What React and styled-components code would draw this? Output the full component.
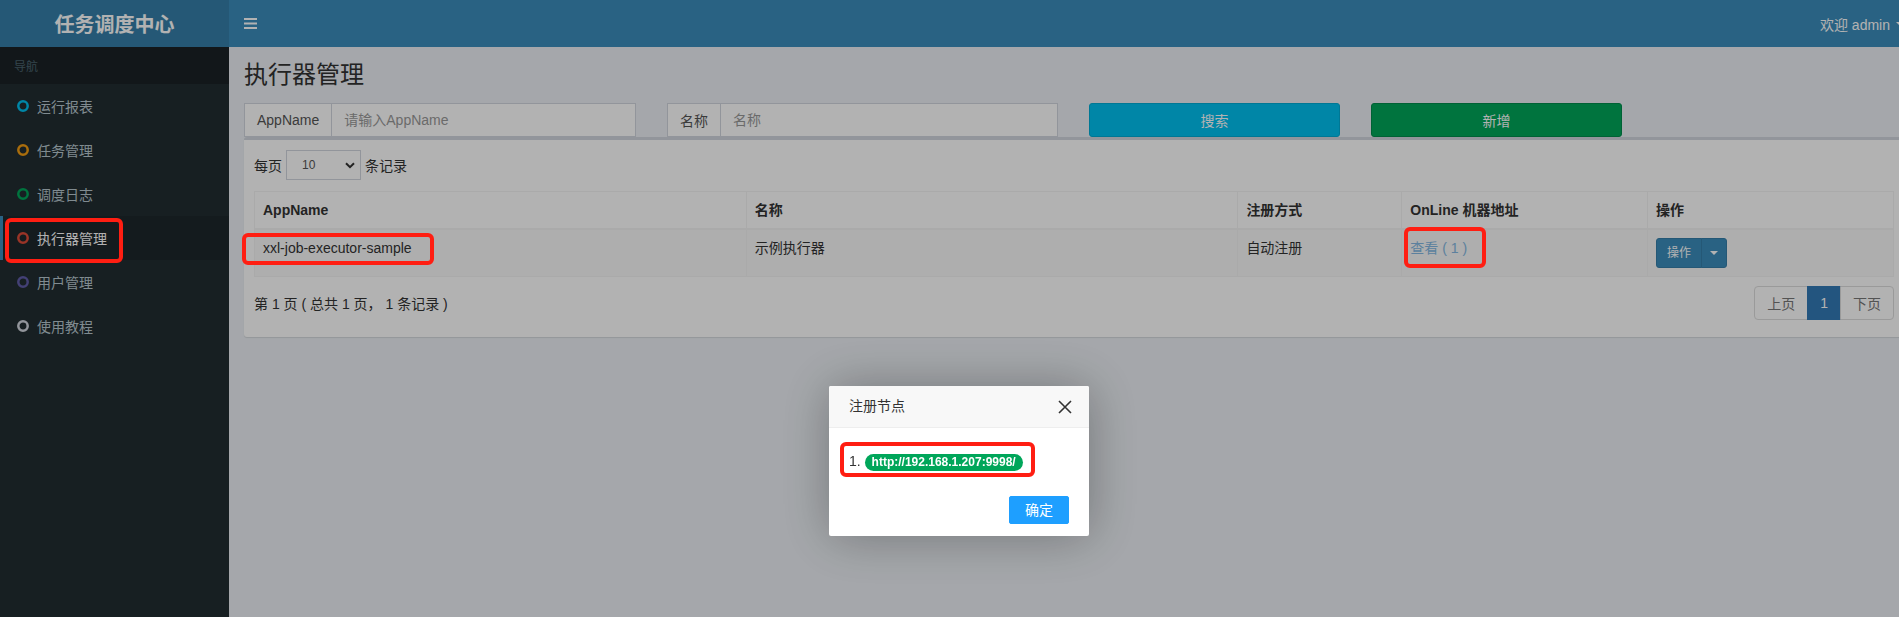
import React from "react";
import styled, { createGlobalStyle } from "styled-components";

const GlobalStyle = createGlobalStyle`
  html, body {
    margin: 0;
    padding: 0;
    height: 100%;
    overflow: hidden;
  }
  body {
    font-family: "Liberation Sans", "Noto Sans CJK SC", sans-serif;
    font-size: 14px;
    color: #333;
    background: #ecf0f5;
  }
  * {
    box-sizing: border-box;
  }
`;

// the captured page is a little wider than the window, so its right edge is cut
const Page = styled.div`
  width: 1919px;
  height: 617px;
  display: flex;
  flex-direction: column;
`;

const Header = styled.header`
  display: flex;
  height: 47px;
  flex-shrink: 0;
`;

const Logo = styled.div`
  width: 229px;
  background: #367fa9;
  color: #fff;
  font-size: 20px;
  font-weight: 700;
  display: flex;
  align-items: center;
  justify-content: center;
`;

const Navbar = styled.nav`
  flex: 1;
  background: #3c8dbc;
  color: #fff;
  display: flex;
  align-items: center;
  justify-content: space-between;
  padding: 0 15px;
`;

const UserMenu = styled.div`
  display: flex;
  align-items: center;
  gap: 6px;
  font-size: 14px;
`;

const Caret = styled.span`
  width: 0;
  height: 0;
  border-top: 4px solid #fff;
  border-left: 4px solid transparent;
  border-right: 4px solid transparent;
`;

const Body = styled.div`
  flex: 1;
  display: flex;
  min-height: 0;
`;

const Sidebar = styled.aside`
  width: 229px;
  flex-shrink: 0;
  background: #222d32;
`;

const NavHeader = styled.div`
  height: 37px;
  padding: 0 14px;
  display: flex;
  align-items: center;
  background: #1a2226;
  color: #4b646f;
  font-size: 12px;
`;

const MenuItem = styled.div`
  position: relative;
  height: 44px;
  display: flex;
  align-items: center;
  gap: 8px;
  padding-left: 14px;
  border-left: 3px solid ${(p) => (p.$active ? "#3c8dbc" : "transparent")};
  background: ${(p) => (p.$active ? "#1e282c" : "transparent")};
  color: ${(p) => (p.$active ? "#fff" : "#b8c7ce")};
  font-size: 14px;
`;

const Mark = styled.span`
  position: absolute;
  left: ${(p) => p.$l}px;
  top: ${(p) => p.$t}px;
  width: ${(p) => p.$w}px;
  height: ${(p) => p.$h}px;
  border: 4px solid #ff1e12;
  border-radius: 6px;
  z-index: 300;
  pointer-events: none;
`;

const Main = styled.main`
  flex: 1;
  min-width: 0;
  padding: 15px 15px 0;
`;

const Title = styled.h1`
  margin: 0;
  font-size: 24px;
  line-height: 26px;
  font-weight: 400;
  color: #333;
`;

const SearchRow = styled.div`
  display: grid;
  grid-template-columns: 392px 391px 251px 251px;
  column-gap: 31px;
  margin-top: 15px;
`;

const InputGroup = styled.div`
  display: flex;
  height: 34px;
`;

const Addon = styled.span`
  display: flex;
  align-items: center;
  padding: 0 12px;
  background: #fff;
  color: #555;
  border: 1px solid #d2d6de;
  border-right: 0;
`;

const Input = styled.input`
  flex: 1;
  min-width: 0;
  border: 1px solid #d2d6de;
  padding: 6px 12px;
  font: inherit;
  color: #555;
  background: #fff;
  outline: none;
  &::placeholder {
    color: #999;
  }
`;

const Btn = styled.div`
  height: 34px;
  display: flex;
  align-items: center;
  justify-content: center;
  border-radius: 3px;
  color: #fff;
  background: ${(p) => p.$bg};
  border: 1px solid ${(p) => p.$border};
`;

const Box = styled.div`
  background: #fff;
  border-top: 3px solid #d2d6de;
  border-radius: 3px;
  box-shadow: 0 1px 1px rgba(0, 0, 0, 0.1);
  padding: 10px;
`;

const LengthRow = styled.div`
  display: flex;
  align-items: center;
  gap: 4px;
  height: 30px;
`;

const FakeSelect = styled.div`
  width: 75px;
  height: 30px;
  border: 1px solid #d2d6de;
  display: flex;
  align-items: center;
  justify-content: space-between;
  padding: 0 5px 0 15px;
  font-size: 12px;
  color: #555;
`;

const Table = styled.table`
  width: 100%;
  margin-top: 11px;
  border-collapse: collapse;
  table-layout: fixed;
`;

const Th = styled.th`
  width: ${(p) => p.$w};
  text-align: left;
  font-weight: 700;
  padding: 8px;
  line-height: 20px;
  border: 1px solid #f4f4f4;
  border-bottom-width: 2px;
  vertical-align: bottom;
`;

const Tr = styled.tr`
  background: ${(p) => (p.$odd ? "#f9f9f9" : "#fff")};
`;

const Td = styled.td`
  padding: 8px;
  line-height: 20px;
  border: 1px solid #f4f4f4;
  vertical-align: top;
`;

const Anchor = styled.span`
  position: relative;
  display: inline-block;
`;

const Link = styled(Anchor)`
  color: #84b8e2;
`;

const BtnGroup = styled.div`
  display: inline-flex;
  height: 30px;
`;

const OpBtn = styled.div`
  display: flex;
  align-items: center;
  justify-content: center;
  padding: 0 10px;
  font-size: 12px;
  color: #fff;
  background: #3c8dbc;
  border: 1px solid #367fa9;
  border-radius: ${(p) => (p.$caret ? "0 3px 3px 0" : "3px 0 0 3px")};
  margin-left: ${(p) => (p.$caret ? "-1px" : "0")};
  width: ${(p) => (p.$caret ? "26px" : "auto")};
`;

const Footer = styled.div`
  display: flex;
  align-items: center;
  justify-content: space-between;
  margin-top: 9px;
  margin-bottom: 7px;
`;

const Pagination = styled.div`
  display: flex;
  height: 34px;
`;

const PageLink = styled.div`
  display: flex;
  align-items: center;
  padding: 0 12px;
  margin-left: -1px;
  border: 1px solid ${(p) => (p.$active ? "#337ab7" : "#ddd")};
  background: ${(p) => (p.$active ? "#337ab7" : "#fff")};
  color: ${(p) => (p.$active ? "#fff" : "#777")};
  &:first-child {
    margin-left: 0;
    border-radius: 4px 0 0 4px;
  }
  &:last-child {
    border-radius: 0 4px 4px 0;
  }
`;

const Shade = styled.div`
  position: fixed;
  inset: 0;
  background: rgba(0, 0, 0, 0.3);
  z-index: 100;
`;

const Modal = styled.div`
  position: fixed;
  left: 829px;
  top: 386px;
  width: 260px;
  background: #fff;
  border-radius: 2px;
  box-shadow: 1px 1px 50px rgba(0, 0, 0, 0.3);
  z-index: 200;
`;

const ModalTitle = styled.div`
  position: relative;
  height: 42px;
  line-height: 41px;
  padding: 0 80px 0 20px;
  background: #f8f8f8;
  border-bottom: 1px solid #eee;
  border-radius: 2px 2px 0 0;
  color: #333;
  font-size: 14px;
`;

const Close = styled.svg`
  position: absolute;
  right: 17px;
  top: 14px;
`;

const ModalBody = styled.div`
  padding: 23px 20px 20px;
  line-height: 20px;
  color: #333;
`;

const Badge = styled.span`
  display: inline-block;
  padding: 0 7px;
  line-height: 17px;
  border-radius: 10px;
  background: #00a65a;
  color: #fff;
  font-size: 12px;
  font-weight: 700;
`;

const ModalFooter = styled.div`
  display: flex;
  justify-content: flex-end;
  padding: 5px 15px 12px;
`;

const ConfirmBtn = styled.div`
  height: 28px;
  line-height: 26px;
  padding: 0 15px;
  margin: 0 5px;
  border: 1px solid #1e9fff;
  background: #1e9fff;
  color: #fff;
  border-radius: 2px;
  font-size: 14px;
`;

const Ring = ({ color }) => (
  <svg width="12" height="12" viewBox="0 0 12 12">
    <circle cx="6" cy="6" r="4.7" fill="none" stroke={color} strokeWidth="2.5" />
  </svg>
);

const Bars = () => (
  <svg width="13" height="11" viewBox="0 0 13 11">
    <rect x="0" y="0" width="13" height="2" fill="#fff" />
    <rect x="0" y="4.5" width="13" height="2" fill="#fff" />
    <rect x="0" y="9" width="13" height="2" fill="#fff" />
  </svg>
);

const menu = [
  { label: "运行报表", color: "#00c0ef" },
  { label: "任务管理", color: "#f39c12" },
  { label: "调度日志", color: "#00a65a" },
  { label: "执行器管理", color: "#dd4b39", active: true },
  { label: "用户管理", color: "#605ca8" },
  { label: "使用教程", color: "#d2d6de" },
];

const App = () => {
  return (
    <Page>
      <GlobalStyle />
      <Header>
        <Logo>任务调度中心</Logo>
        <Navbar>
          <Bars />
          <UserMenu>
            欢迎 admin
            <Caret />
          </UserMenu>
        </Navbar>
      </Header>
      <Body>
        <Sidebar>
          <NavHeader>导航</NavHeader>
          {menu.map((m) => (
            <MenuItem key={m.label} $active={m.active}>
              <Ring color={m.color} />
              {m.label}
              {m.active && <Mark $l={2} $t={2} $w={118} $h={45} />}
            </MenuItem>
          ))}
        </Sidebar>
        <Main>
          <Title>执行器管理</Title>
          <SearchRow>
            <InputGroup>
              <Addon>AppName</Addon>
              <Input placeholder="请输入AppName" />
            </InputGroup>
            <InputGroup>
              <Addon>名称</Addon>
              <Input placeholder="名称" />
            </InputGroup>
            <Btn $bg="#00c0ef" $border="#00acd6">搜索</Btn>
            <Btn $bg="#00a65a" $border="#008d4c">新增</Btn>
          </SearchRow>
          <Box>
            <LengthRow>
              每页
              <FakeSelect>
                10
                <svg width="10" height="7" viewBox="0 0 10 7">
                  <path d="M1 1.2 L5 5.2 L9 1.2" fill="none" stroke="#333" strokeWidth="2" />
                </svg>
              </FakeSelect>
              条记录
            </LengthRow>
            <Table>
              <thead>
                <tr>
                  <Th $w="30%">AppName</Th>
                  <Th $w="30%">名称</Th>
                  <Th $w="10%">注册方式</Th>
                  <Th $w="15%">OnLine 机器地址</Th>
                  <Th $w="15%">操作</Th>
                </tr>
              </thead>
              <tbody>
                <Tr $odd>
                  <Td>
                    <Anchor>
                      xxl-job-executor-sample
                      <Mark $l={-21} $t={-5} $w={192} $h={32} />
                    </Anchor>
                  </Td>
                  <Td>示例执行器</Td>
                  <Td>自动注册</Td>
                  <Td>
                    <Link>
                      查看 ( 1 )
                      <Mark $l={-6} $t={-11} $w={82} $h={41} />
                    </Link>
                  </Td>
                  <Td>
                    <BtnGroup>
                      <OpBtn>操作</OpBtn>
                      <OpBtn $caret>
                        <Caret />
                      </OpBtn>
                    </BtnGroup>
                  </Td>
                </Tr>
              </tbody>
            </Table>
            <Footer>
              <span>第 1 页 ( 总共 1 页， 1 条记录 )</span>
              <Pagination>
                <PageLink>上页</PageLink>
                <PageLink $active>1</PageLink>
                <PageLink>下页</PageLink>
              </Pagination>
            </Footer>
          </Box>
        </Main>
      </Body>
      <Shade />
      <Modal>
        <ModalTitle>
          注册节点
          <Close width="14" height="14" viewBox="0 0 14 14">
            <path d="M1 1 L13 13 M13 1 L1 13" stroke="#333" strokeWidth="1.6" />
          </Close>
        </ModalTitle>
        <ModalBody>
          <Anchor>
            1. <Badge>http://192.168.1.207:9998/</Badge>
            <Mark $l={-9} $t={-9} $w={195} $h={35} />
          </Anchor>
        </ModalBody>
        <ModalFooter>
          <ConfirmBtn>确定</ConfirmBtn>
        </ModalFooter>
      </Modal>
    </Page>
  );
};

export default App;
